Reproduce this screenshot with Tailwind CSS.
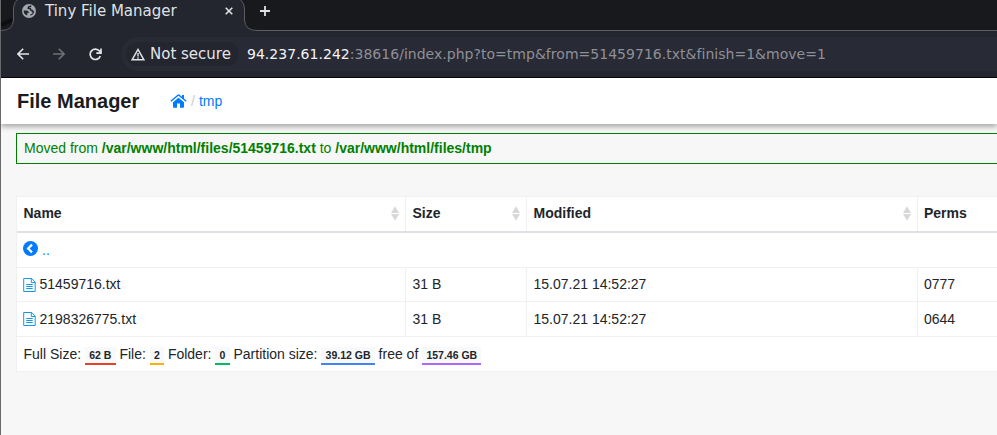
<!DOCTYPE html>
<html lang="en">
<head>
<meta charset="utf-8">
<title>Tiny File Manager</title>
<script src="https://cdn.jsdelivr.net/npm/@tailwindcss/browser@4"></script>
</head>
<body class="w-[997px] h-[435px] overflow-hidden bg-[#f7f7f7] border-l border-[#6a6a6c] font-['Liberation_Sans',Arial,sans-serif] text-sm text-[#212529]">
<div class="font-['DejaVu_Sans',sans-serif]">
  <div class="relative h-[31px] bg-[#18191d] overflow-hidden">
    <svg class="absolute inset-0" width="996" height="31" fill="none"><path d="M0 25L11 20" stroke="#0c0d10" stroke-width="4"/><path d="M0 31V30.5Q12 30.5 12.5 20V8Q13 2 17 -1H239Q243.500 3 243.500 9V20Q244 30.500 256 30.500H996V31Z" fill="#23252f"/><path d="M0 30.500Q12 30.500 12.500 20V8Q13 2 17 -1M239 -1Q243.500 3 243.500 9V20Q244 30.500 256 30.500H996" stroke="#5b5c60"/></svg>
    <div class="relative flex items-center h-[22px] pl-[21px] text-[#dfe1e5]">
      <svg width="14" height="14" viewBox="0 0 14 14"><circle cx="7" cy="7" r="7" fill="#a3a8af"/><path d="M9.300 2.200C7.500 2 6 2.800 6.300 4.500H8.300Q8.300 6.300 10 6.500 9.900 7.600 11.800 7.400" fill="none" stroke="#23252f" stroke-width="1.500"/><path d="M1.600 6.600H4.600Q7 6.700 6.800 9H5.300V11.600A5.300 5.300 0 0 1 1.600 6.600z" fill="#23252f"/><path d="M8.300 11.800V10.400Q10.600 10.200 10.800 8L12.200 7.600A5.400 5.400 0 0 1 8.300 11.800z" fill="#23252f"/></svg>
      <span class="ml-[9px] w-[180px] text-[15px] leading-[22px] whitespace-nowrap">Tiny File Manager</span>
      <svg width="8" height="8" viewBox="0 0 8 8" stroke="currentColor" stroke-width="1.600"><path d="M.7.7l6.600 6.600M7.300.7L.7 7.300"/></svg>
      <svg class="ml-[27px]" width="10" height="10" viewBox="0 0 10 10" stroke="currentColor" stroke-width="1.800"><path d="M5 0v10M0 5h10"/></svg>
    </div>
  </div>
  <div class="flex items-center h-[47px] bg-[#23252f] border-b border-[#08080c] text-[#e3e4e7] pl-4">
    <svg width="12" height="12" viewBox="0 0 12 12" fill="none" stroke="currentColor" stroke-width="1.600"><path d="M12 6H1M6.200.8L1 6l5.200 5.200"/></svg>
    <svg class="ml-6 text-[#707178]" width="12" height="12" viewBox="0 0 12 12" fill="none" stroke="currentColor" stroke-width="1.600"><path d="M0 6h11M5.800.8L11 6l-5.200 5.200"/></svg>
    <svg class="ml-6" width="13" height="13" viewBox="0 0 13 13" fill="none" stroke="currentColor" stroke-width="1.700"><path d="M11.300 8A5.200 5.200 0 1 1 10.500 3.100L11.500 4.500M12 .5v4.700H7.300"/></svg>
    <div class="flex items-center ml-[19px] h-[34px] flex-1 rounded-l-full bg-[#282a35] pl-[5px]">
      <div class="flex items-center w-[113px] h-6 rounded-full bg-[#23252f] pl-[5px]">
        <svg width="14" height="13" viewBox="0 0 14 13" fill="none" stroke="currentColor" stroke-width="1.400"><path d="M7 1.400L12.900 11.800H1.100zM7 5v3.500M7 9.300v1.400"/></svg>
        <span class="ml-[5px] pt-px text-[15px] whitespace-nowrap">Not secure</span>
      </div>
      <span class="ml-2 text-[14px] tracking-[0.025px] whitespace-nowrap text-[#8f9097]"><span class="text-[#f4f4f5]">94.237.61.242</span>:38616/index.php?to=tmp&amp;from=51459716.txt&amp;finish=1&amp;move=1</span>
    </div>
  </div>
</div>

<header class="relative flex items-center h-[46px] bg-white pl-4 shadow-[0_3px_5px_rgba(0,0,0,0.3)]">
  <h1 class="w-[153px] text-xl font-bold text-[#1b1c1d]">File Manager</h1>
  <nav class="flex items-center text-[#007bff]">
    <svg width="17" height="14" viewBox="0 0 17 14" fill="currentColor"><path d="M8.500 3.700L3 8.300V13q0 .7.700.7H7V9.500h3v4.200h3.300q.7 0 .7-.7V8.300z"/><path d="M16.600 6.800L14 4.600V1h-2v1.800L9.500.7q-1-.8-2 0L.4 6.800l.8.900L8.500 1.700l7.300 6z"/></svg>
    <span class="ml-[4px] text-[#ccc]">/</span><a class="ml-[4px]">tmp</a>
  </nav>
</header>

<main class="pl-[15px] pt-[9px]">
  <p class="h-[31px] border border-r-0 border-[#008000] pl-[7px] leading-[29px] text-[#008000]">Moved from <b>/var/www/html/files/51459716.txt</b> to <b>/var/www/html/files/tmp</b></p>

  <section class="mt-8 h-44 bg-white border border-r-0 border-[#eff0f1]">
    <div class="grid grid-cols-[389px_121px_391px_1fr] h-9 border-b-2 border-[#dee2e6] font-bold leading-[33px]">
      <div class="flex justify-between pl-[6.500px] pr-[6px] border-r border-[#eff0f1]">Name<svg class="mt-[9px]" width="8" height="15" viewBox="0 0 8 15" fill="#d8d8d8"><path d="M4 .3l4 6.700H0zM0 8h8L4 14.700z"/></svg></div>
      <div class="flex justify-between pl-[6.500px] pr-[6px] border-r border-[#eff0f1]">Size<svg class="mt-[9px]" width="8" height="15" viewBox="0 0 8 15" fill="#d8d8d8"><path d="M4 .3l4 6.700H0zM0 8h8L4 14.700z"/></svg></div>
      <div class="flex justify-between pl-[6.500px] pr-[6px] border-r border-[#eff0f1]">Modified<svg class="mt-[9px]" width="8" height="15" viewBox="0 0 8 15" fill="#d8d8d8"><path d="M4 .3l4 6.700H0zM0 8h8L4 14.700z"/></svg></div>
      <div class="pl-[6px]">Perms</div>
    </div>
    <div class="flex items-center h-[35px] border-b border-[#eff0f1] pl-[6px] pb-[4px] text-[#007bff]">
      <svg width="15" height="15" viewBox="0 0 15 15"><circle cx="7.500" cy="7.500" r="7.500" fill="currentColor"/><path d="M9 3.600L5.100 7.500 9 11.400" fill="none" stroke="#fff" stroke-width="2.200"/></svg>
      <span class="ml-1 pt-[3px]">..</span>
    </div>
    <div class="grid grid-cols-[389px_121px_391px_1fr] h-[34px] border-b border-[#eff0f1] leading-[33px]">
      <div class="flex items-center pl-[6px] border-r border-[#eff0f1]"><svg width="13" height="14" viewBox="0 0 13 14" fill="none" stroke="#1698e8"><path d="M.7.500h8l3.500 3.500v9.500H.7zM8.300 .5v4h4M3.200 6.500h6.500M3.200 8.500h6.500M3.200 10.500h6.500"/></svg><span class="ml-[3.500px]">51459716.txt</span></div>
      <div class="pl-[6.500px] border-r border-[#eff0f1]">31 B</div><div class="pl-[6.500px] border-r border-[#eff0f1]">15.07.21 14:52:27</div><div class="pl-[6px]">0777</div>
    </div>
    <div class="grid grid-cols-[389px_121px_391px_1fr] h-[35px] border-b border-[#eff0f1] leading-[34px]">
      <div class="flex items-center pl-[6px] border-r border-[#eff0f1]"><svg width="13" height="14" viewBox="0 0 13 14" fill="none" stroke="#1698e8"><path d="M.7.500h8l3.500 3.500v9.500H.7zM8.300 .5v4h4M3.200 6.500h6.500M3.200 8.500h6.500M3.200 10.500h6.500"/></svg><span class="ml-[3.500px]">2198326775.txt</span></div>
      <div class="pl-[6.500px] border-r border-[#eff0f1]">31 B</div><div class="pl-[6.500px] border-r border-[#eff0f1]">15.07.21 14:52:27</div><div class="pl-[6px]">0644</div>
    </div>
    <div class="flex items-center gap-[3.900px] h-[34px] pl-[6.500px] whitespace-nowrap">
      <span>Full Size:</span><span class="mt-[3px] h-[18px] px-[4.200px] bg-[#f8f9fa] border-b-2 border-[#e8412a] text-[10.5px] leading-4 font-bold">62 B</span>
      <span>File:</span><span class="mt-[3px] h-[18px] px-[4.200px] bg-[#f8f9fa] border-b-2 border-[#f9b200] text-[10.5px] leading-4 font-bold">2</span>
      <span>Folder:</span><span class="mt-[3px] h-[18px] px-[4.200px] bg-[#f8f9fa] border-b-2 border-[#00bb62] text-[10.5px] leading-4 font-bold">0</span>
      <span>Partition size:</span><span class="mt-[3px] h-[18px] px-[4.200px] bg-[#f8f9fa] border-b-2 border-[#4185f4] text-[10.5px] leading-4 font-bold">39.12 GB</span>
      <span>free of</span><span class="mt-[3px] h-[18px] px-[4.200px] bg-[#f8f9fa] border-b-2 border-[#ac68fc] text-[10.5px] leading-4 font-bold">157.46 GB</span>
    </div>
  </section>
</main>
</body>
</html>
